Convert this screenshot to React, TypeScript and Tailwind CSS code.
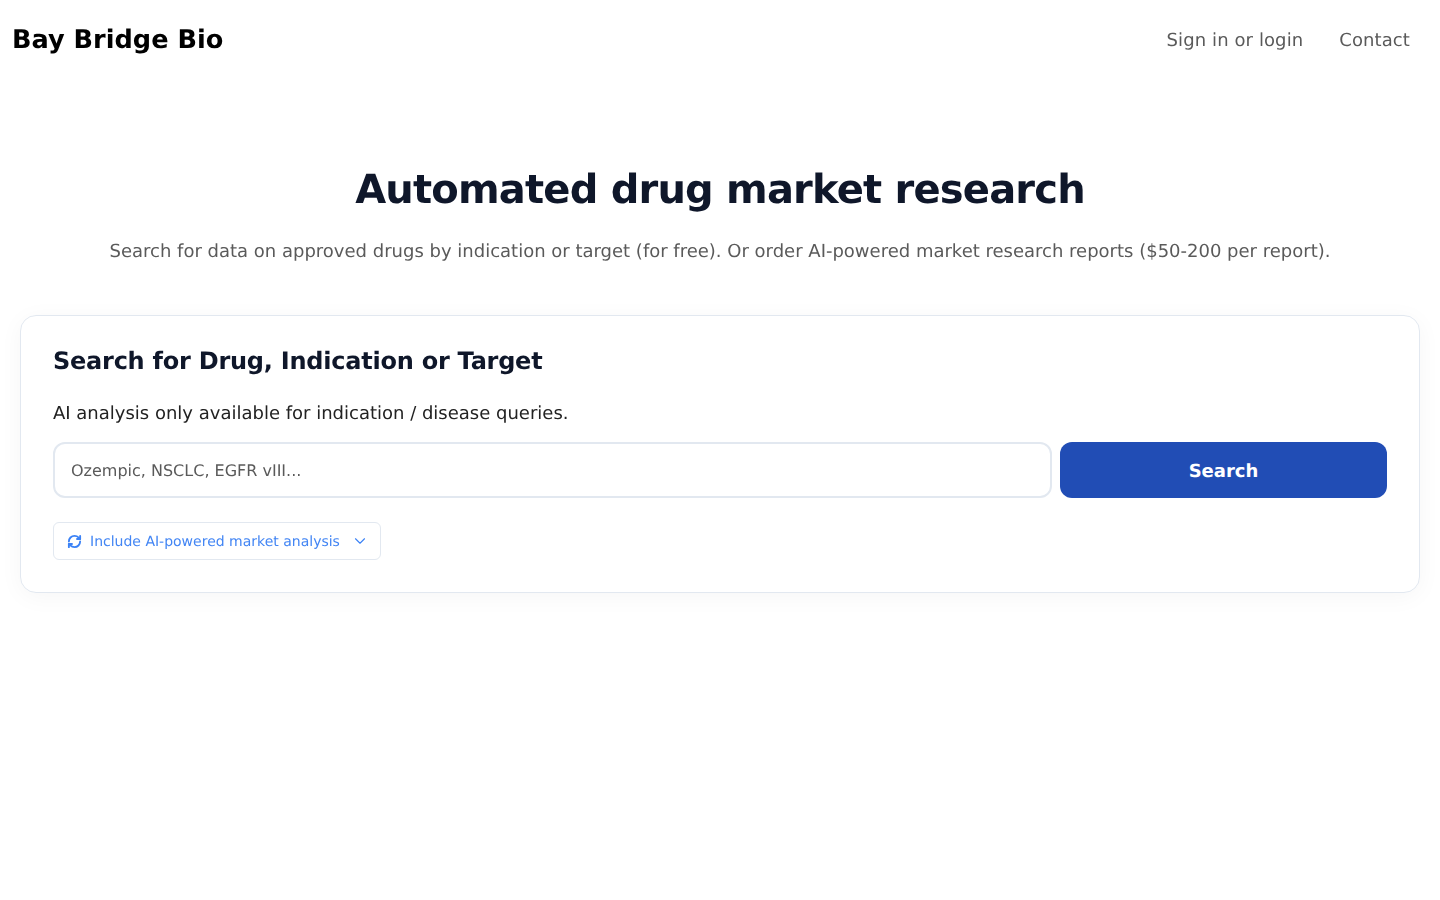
import React from 'react';
import { ChevronDown, RefreshCw } from 'lucide-react';

const font = { fontFamily: '"DejaVu Sans", sans-serif', textRendering: 'geometricPrecision' as const };

const App: React.FC = () => {
  return (
    <div className="min-h-screen bg-white font-['DejaVu_Sans',sans-serif] [text-rendering:geometricPrecision]">
      <header className="flex items-center justify-between h-[80px] pl-3 pr-[30px] [will-change:opacity]">
        <span className="text-[25.6px] font-bold text-black">Bay Bridge Bio</span>
        <nav className="flex items-center gap-9 text-[18px] tracking-[0.1px] text-[#5a5a5a]">
          <a>Sign in or login</a>
          <a>Contact</a>
        </nav>
      </header>

      <main className="px-5 pt-[80px] [will-change:opacity]">
        <h1 className="text-center text-[40px] leading-[60px] font-bold tracking-[-0.02em] text-[#0f172a]">Automated drug market research</h1>
        <p className="mt-[18px] text-center text-[18px] leading-[28px] text-[#5a5a5a]">
          Search for data on approved drugs by indication or target (for free). Or order AI-powered market research reports ($50-200 per report).
        </p>

        <section className="mt-[49px] rounded-2xl border border-[#e2e8f0] bg-white px-8 pt-[31px] pb-8 shadow-[0_4px_24px_rgba(0,0,0,0.04)]">
          <h2 className="text-[24px] leading-[28px] font-bold tracking-[-0.01em] text-[#0f172a]">Search for Drug, Indication or Target</h2>
          <p className="mt-[27px] text-[18px] leading-[24px] text-[#222222]">AI analysis only available for indication / disease queries.</p>
          <div className="mt-[16px] flex gap-2">
            <input
              style={font}
              placeholder="Ozempic, NSCLC, EGFR vIII..."
              className="h-[56px] min-w-0 flex-[3] rounded-xl border-2 border-[#e2e8f0] bg-white px-4 text-[16px] placeholder:text-[#5a5a5a]"
            />
            <button style={font} className="h-[56px] w-[327px] rounded-xl bg-[#214db5] pt-[2px] text-[18px] font-bold text-white">Search</button>
          </div>
          <button style={font} className="mt-6 flex h-[38px] w-[328px] items-center rounded-md border border-[#e2e8f0] bg-white pl-[12.5px] text-[14px] text-[#3b82f6]">
            <RefreshCw size={15} strokeWidth={3} />
            <span className="ml-[8.5px] pt-[2px] text-[#4285f4]">Include AI-powered market analysis</span>
            <ChevronDown size={18} strokeWidth={1.5} className="ml-[11px]" />
          </button>
        </section>
      </main>
    </div>
  );
};

export default App;
